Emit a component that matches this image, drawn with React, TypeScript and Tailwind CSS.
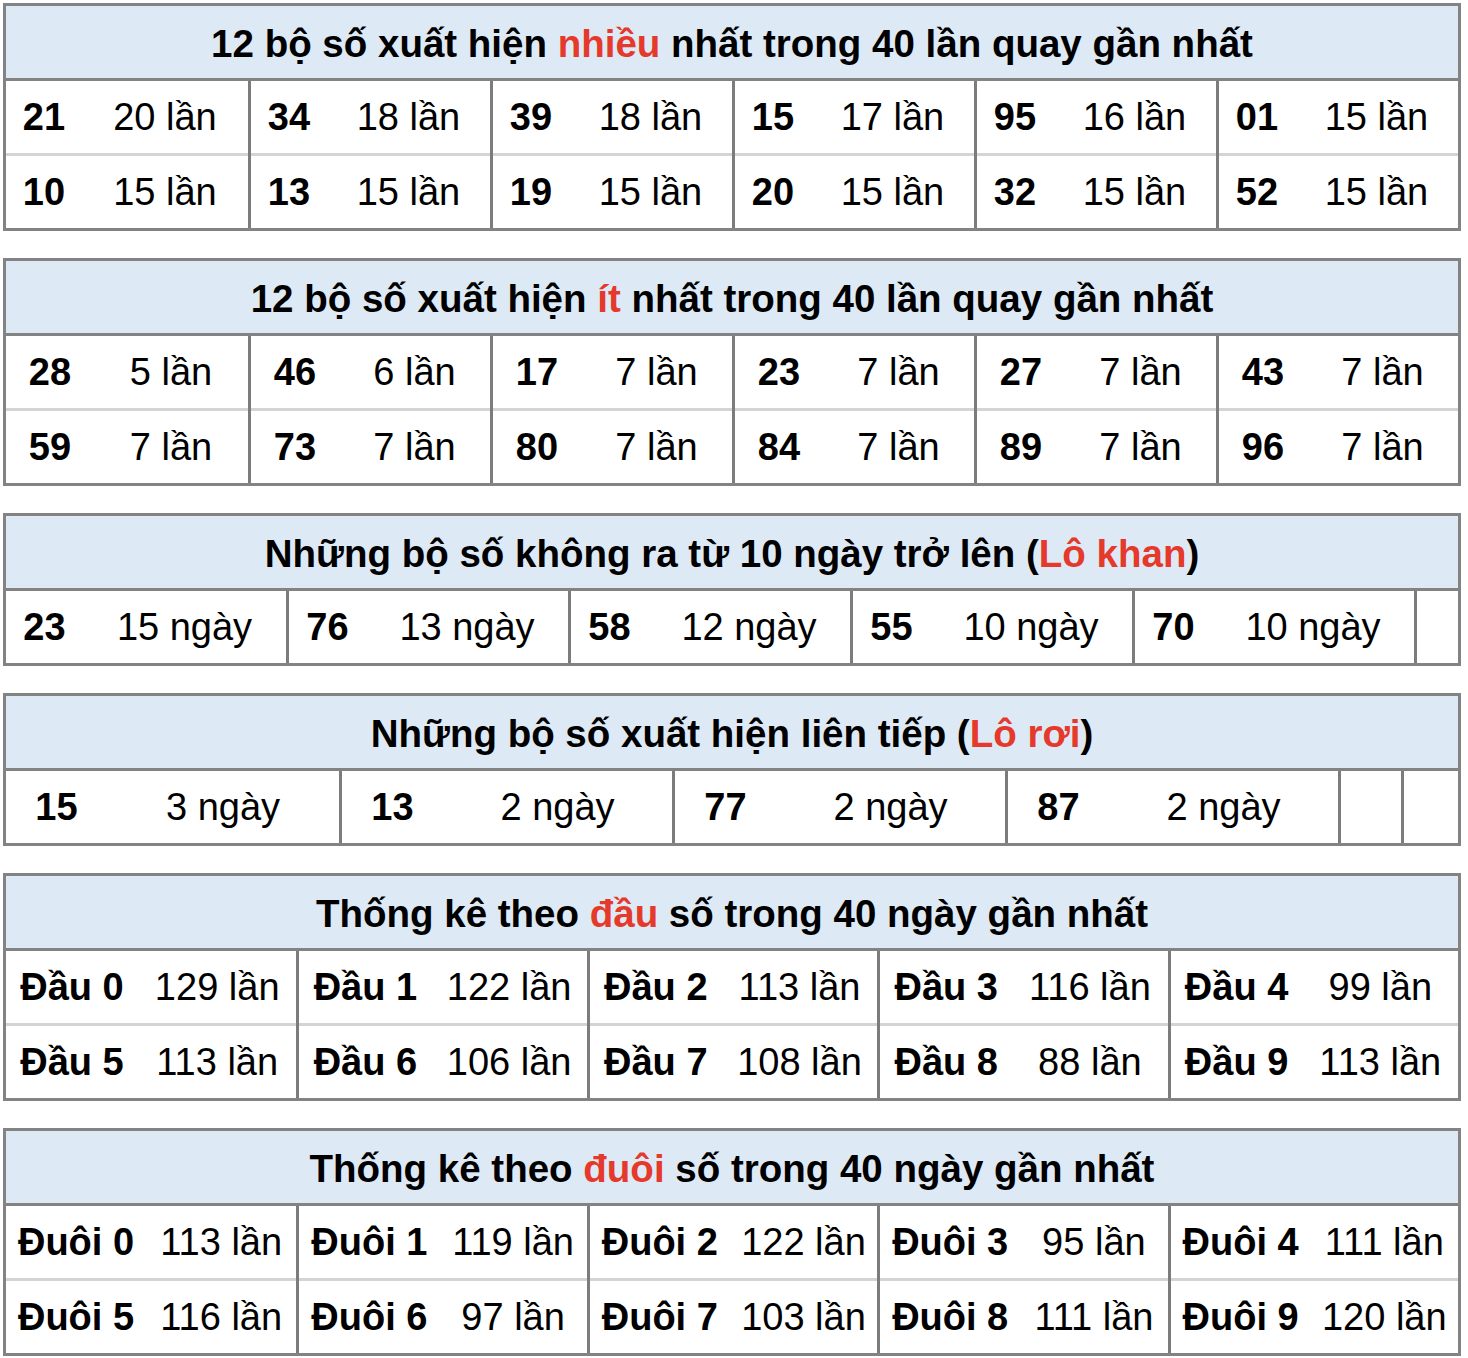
import React from "react";

type Cell = [string, string] | null;

const RED = "text-[#e5392b]";

function Table({
  title,
  cols,
  numW,
  groups,
}: {
  title: React.ReactNode;
  cols: string;
  numW: string;
  groups: Cell[][];
}) {
  return (
    <div className="w-[1458px] border-[3px] border-[#838383] bg-white">
      <div className="h-[75px] pt-[3px] bg-[#dde9f5] border-b-[3px] border-[#838383] flex items-center justify-center font-bold text-[38.5px] text-black">
        {title}
      </div>
      <div className={`grid ${cols}`}>
        {groups.map((rows, gi) => (
          <div
            key={gi}
            className={`flex flex-col ${gi > 0 ? "border-l-[3px] border-[#7c7c7c]" : ""}`}
          >
            {rows.map((c, ri) => (
              <div
                key={ri}
                className={`flex items-center text-[38px] text-black ${
                  ri > 0 ? "h-[75px] border-t-[3px] border-[#d4d4d4]" : "h-[72px]"
                }`}
              >
                {c && (
                  <>
                    <div className={`${numW} shrink-0 text-center font-bold whitespace-nowrap`}>{c[0]}</div>
                    <div className="flex-1 text-center whitespace-nowrap">{c[1]}</div>
                  </>
                )}
              </div>
            ))}
          </div>
        ))}
      </div>
    </div>
  );
}

function pairs(r1: [string, string][], r2?: [string, string][]): Cell[][] {
  return r1.map((c, i) => (r2 ? [c, r2[i]] : [c]));
}

export default function App() {
  const t1 = pairs(
    [
      ["21", "20 lần"],
      ["34", "18 lần"],
      ["39", "18 lần"],
      ["15", "17 lần"],
      ["95", "16 lần"],
      ["01", "15 lần"],
    ],
    [
      ["10", "15 lần"],
      ["13", "15 lần"],
      ["19", "15 lần"],
      ["20", "15 lần"],
      ["32", "15 lần"],
      ["52", "15 lần"],
    ]
  );
  const t2 = pairs(
    [
      ["28", "5 lần"],
      ["46", "6 lần"],
      ["17", "7 lần"],
      ["23", "7 lần"],
      ["27", "7 lần"],
      ["43", "7 lần"],
    ],
    [
      ["59", "7 lần"],
      ["73", "7 lần"],
      ["80", "7 lần"],
      ["84", "7 lần"],
      ["89", "7 lần"],
      ["96", "7 lần"],
    ]
  );
  const t3: Cell[][] = [
    ...pairs([
      ["23", "15 ngày"],
      ["76", "13 ngày"],
      ["58", "12 ngày"],
      ["55", "10 ngày"],
      ["70", "10 ngày"],
    ]),
    [null],
  ];
  const t4: Cell[][] = [
    ...pairs([
      ["15", "3 ngày"],
      ["13", "2 ngày"],
      ["77", "2 ngày"],
      ["87", "2 ngày"],
    ]),
    [null],
    [null],
  ];
  const t5 = pairs(
    [
      ["Đầu 0", "129 lần"],
      ["Đầu 1", "122 lần"],
      ["Đầu 2", "113 lần"],
      ["Đầu 3", "116 lần"],
      ["Đầu 4", "99 lần"],
    ],
    [
      ["Đầu 5", "113 lần"],
      ["Đầu 6", "106 lần"],
      ["Đầu 7", "108 lần"],
      ["Đầu 8", "88 lần"],
      ["Đầu 9", "113 lần"],
    ]
  );
  const t6 = pairs(
    [
      ["Đuôi 0", "113 lần"],
      ["Đuôi 1", "119 lần"],
      ["Đuôi 2", "122 lần"],
      ["Đuôi 3", "95 lần"],
      ["Đuôi 4", "111 lần"],
    ],
    [
      ["Đuôi 5", "116 lần"],
      ["Đuôi 6", "97 lần"],
      ["Đuôi 7", "103 lần"],
      ["Đuôi 8", "111 lần"],
      ["Đuôi 9", "120 lần"],
    ]
  );

  return (
    <div
      className="bg-white min-h-[1358px] pt-[3px] pl-[3px] flex flex-col gap-[27px]"
      style={{ fontFamily: '"Liberation Sans", Arial, Helvetica, sans-serif' }}
    >
      <Table
        title={
          <span>
            12 bộ số xuất hiện <span className={RED}>nhiều</span> nhất trong 40 lần quay gần nhất
          </span>
        }
        cols="grid-cols-6"
        numW="w-[76px]"
        groups={t1}
      />
      <Table
        title={
          <span>
            12 bộ số xuất hiện <span className={RED}>ít</span> nhất trong 40 lần quay gần nhất
          </span>
        }
        cols="grid-cols-6"
        numW="w-[88px]"
        groups={t2}
      />
      <Table
        title={
          <span>
            Những bộ số không ra từ 10 ngày trở lên (<span className={RED}>Lô khan</span>)
          </span>
        }
        cols="grid-cols-[280px_282px_282px_282px_282px_1fr]"
        numW="w-[77px]"
        groups={t3}
      />
      <Table
        title={
          <span>
            Những bộ số xuất hiện liên tiếp (<span className={RED}>Lô rơi</span>)
          </span>
        }
        cols="grid-cols-[333px_333px_333px_333px_63px_1fr]"
        numW="w-[101px]"
        groups={t4}
      />
      <Table
        title={
          <span>
            Thống kê theo <span className={RED}>đầu</span> số trong 40 ngày gần nhất
          </span>
        }
        cols="grid-cols-5"
        numW="w-[132px]"
        groups={t5}
      />
      <Table
        title={
          <span>
            Thống kê theo <span className={RED}>đuôi</span> số trong 40 ngày gần nhất
          </span>
        }
        cols="grid-cols-5"
        numW="w-[140px]"
        groups={t6}
      />
    </div>
  );
}
